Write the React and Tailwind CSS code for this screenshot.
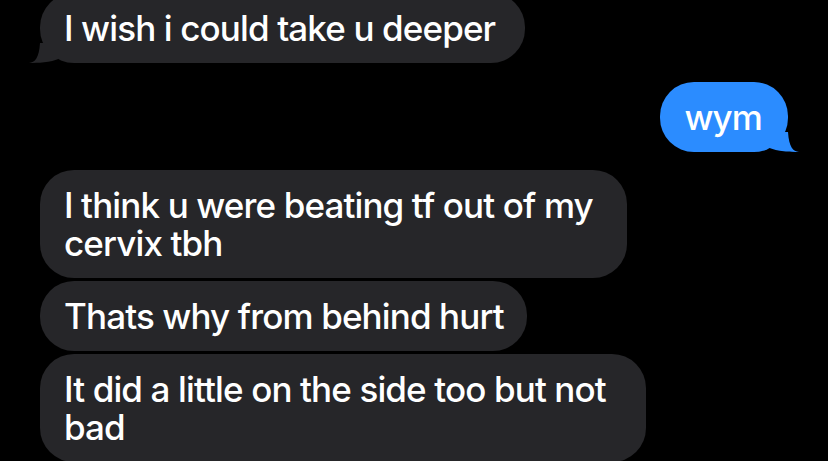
import React from 'react';

const messages = [
    { id: 1, from: 'them', lines: ['I wish i could take u deeper'], width: 'w-[485px]', tail: true, space: '-mt-[7px]' },
    { id: 2, from: 'me', lines: ['wym'], tail: true, space: 'mt-[19px]' },
    { id: 3, from: 'them', lines: ['I think u were beating tf out of my', 'cervix tbh'], width: 'w-[587px]', tail: false, space: 'mt-[18px]' },
    { id: 4, from: 'them', lines: ['Thats why from behind hurt'], width: 'w-[487px]', tail: false, space: 'mt-[3px]' },
    { id: 5, from: 'them', lines: ['It did a little on the side too but not', 'bad'], width: 'w-[606px]', tail: false, space: 'mt-[3px]' },
];

// bubble tail, drawn for the left side and mirrored for the right
const Tail = ({ side, color }) => (
    <svg
        width="34"
        height="30"
        viewBox="0 0 34 30"
        className={`absolute bottom-0 ${side === 'left' ? 'left-[-12px]' : 'right-[-12px] -scale-x-100'}`}
    >
        <path d="M1 30 C7 29.5 11 25 12 10 L32 10 L32 25.5 C22 29.5 10 30 1 30 Z" fill={color} />
    </svg>
);

const Bubble = ({ msg }) => {
    const mine = msg.from === 'me';
    const color = mine ? '#2b8cff' : '#262629';

    return (
        <div className={`flex ${mine ? 'justify-end' : 'justify-start'} ${msg.space}`}>
            <div
                className={`relative rounded-[34px] py-4 text-[35px] font-medium leading-[38px] tracking-[-0.025em] text-white ${
                    mine ? 'bg-[#2b8cff] pl-6 pr-[26px]' : `bg-[#262629] px-6 ${msg.width}`
                }`}
            >
                {msg.tail && <Tail side={mine ? 'right' : 'left'} color={color} />}
                {msg.lines.map((line) => (
                    <div key={line} className="relative whitespace-nowrap">
                        {line}
                    </div>
                ))}
            </div>
        </div>
    );
};

export default function App() {
    return (
        <div
            className="h-[461px] w-full overflow-hidden bg-black px-10"
            style={{ fontFamily: 'Inter, "Noto Sans", sans-serif' }}
        >
            {messages.map((msg) => (
                <Bubble key={msg.id} msg={msg} />
            ))}
        </div>
    );
}
